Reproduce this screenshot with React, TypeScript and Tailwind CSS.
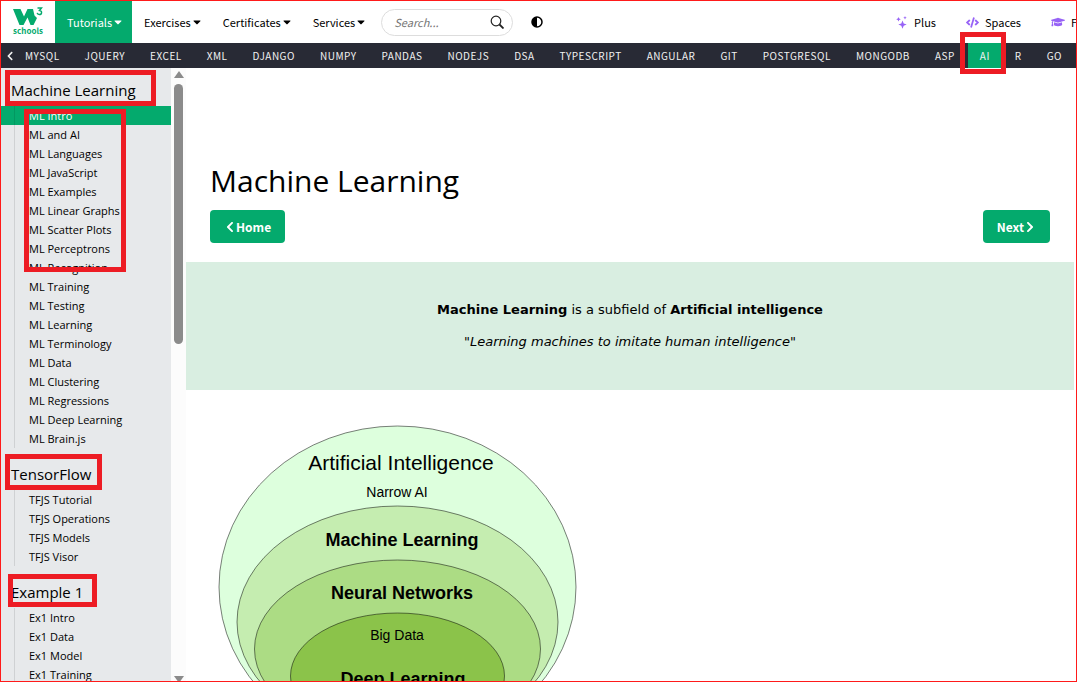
import { FaCaretDown, FaChevronLeft, FaChevronRight, FaCode, FaGraduationCap } from 'react-icons/fa';

const MENUS = ['Exercises', 'Certificates', 'Services'];

const TOPICS = [
  'MYSQL', 'JQUERY', 'EXCEL', 'XML', 'DJANGO', 'NUMPY', 'PANDAS', 'NODEJS', 'DSA', 'TYPESCRIPT',
  'ANGULAR', 'GIT', 'POSTGRESQL', 'MONGODB', 'ASP', 'AI', 'R', 'GO',
];

const SECTIONS = [
  {
    title: 'Machine Learning',
    links: [
      'ML Intro', 'ML and AI', 'ML Languages', 'ML JavaScript', 'ML Examples', 'ML Linear Graphs',
      'ML Scatter Plots', 'ML Perceptrons', 'ML Recognition', 'ML Training', 'ML Testing', 'ML Learning',
      'ML Terminology', 'ML Data', 'ML Clustering', 'ML Regressions', 'ML Deep Learning', 'ML Brain.js',
    ],
  },
  { title: 'TensorFlow', links: ['TFJS Tutorial', 'TFJS Operations', 'TFJS Models', 'TFJS Visor'] },
  { title: 'Example 1', links: ['Ex1 Intro', 'Ex1 Data', 'Ex1 Model', 'Ex1 Training'] },
];

// red highlight frames drawn over the page
const MARKS = [
  'left-[5px] top-[70px] w-[151px] h-[36px]',
  'left-[24px] top-[109px] w-[102px] h-[163px]',
  'left-[5px] top-[454px] w-[97px] h-[36px]',
  'left-[8px] top-[574px] w-[89px] h-[33px]',
  'left-[960px] top-[32px] w-[46px] h-[42px]',
];

function Logo() {
  return (
    <a href="#" aria-label="W3Schools home" className="flex w-[54px] shrink-0 flex-col items-center pt-1.5 text-[#04AA6D]">
      <svg viewBox="0 0 30 19" className="h-[19px] w-[30px]" fill="currentColor">
        <path d="M0 2H7.500L11 9.500 14.500 2H20L21.500 8.500 24 11 20.500 18H17.500L14.500 10.500 10.500 18H6.500Z" />
        <path d="M24.500 1h4l-2 2.500c3 .2 2.600 4-.2 4-1.200 0-2-.6-2.200-1.600" fill="none" stroke="currentColor" strokeWidth="1.400" />
      </svg>
      <span className="font-['Noto_Sans_CJK_SC',sans-serif] text-[8px] leading-[10px] font-bold">schools</span>
    </a>
  );
}

function TopNav() {
  return (
    <header className="flex h-[42px] shrink-0 items-stretch overflow-hidden font-['Noto_Sans_CJK_SC',sans-serif] text-[11px] text-black">
      <Logo />
      <button className="flex shrink-0 items-center bg-[#04AA6D] px-3 text-white">
        Tutorials <FaCaretDown size={12} className="-mr-1" />
      </button>
      {MENUS.map(m => (
        <button key={m} className="flex shrink-0 items-center px-3">
          {m} <FaCaretDown size={12} className="-mr-1" />
        </button>
      ))}
      <div className="ml-1.5 flex h-[27px] w-[132px] shrink-0 items-center self-center rounded-full border border-[#dddddd] pr-2 pl-3">
        <input aria-label="Search" placeholder="Search..." className="w-full min-w-0 italic outline-none placeholder:text-[#757575]" />
        <button aria-label="Submit search">
          <svg viewBox="0 0 14 14" className="size-3.5" fill="none" stroke="#222" strokeWidth="1.200">
            <circle cx="6" cy="6" r="4.800" />
            <path d="M9.500 9.500l4 4" strokeWidth="1.800" />
          </svg>
        </button>
      </div>
      <button aria-label="Toggle dark mode" className="ml-[18px] shrink-0">
        <svg viewBox="0 0 12 12" className="size-3">
          <circle cx="6" cy="6" r="5" fill="white" stroke="black" strokeWidth="1.500" />
          <path d="M6 1a5 5 0 0 0 0 10z" />
        </svg>
      </button>
      <nav className="ml-auto flex shrink-0 items-center whitespace-nowrap">
        <a href="#" className="mr-[30px] flex items-center gap-1.5">
          <svg viewBox="0 0 12 13" className="h-[13px] w-3" fill="#9763f6">
            <path d="M6.500 4.500l1.200 3 3 1-3 1.200-1.200 3-1.200-3-3-1.200 3-1z" />
            <path d="M2.500 1l.7 1.600 1.600.6-1.600.7-.7 1.600-.7-1.600-1.600-.7 1.600-.6zM9 0l.5 1.200 1.200.5-1.200.5L9 3.400l-.5-1.200-1.200-.5 1.200-.5z" />
          </svg>
          Plus
        </a>
        <a href="#" className="mr-[30px] flex items-center gap-1.5">
          <FaCode size={13} color="#9763f6" /> Spaces
        </a>
        <a href="#" className="flex w-[25px] items-center gap-1.5 overflow-hidden">
          <FaGraduationCap size={14} color="#9763f6" className="shrink-0" /> For Teachers
        </a>
      </nav>
    </header>
  );
}

function TopicBar() {
  return (
    <nav className="flex h-[25px] shrink-0 items-stretch gap-px overflow-hidden bg-[#282A35] font-['Noto_Sans_CJK_SC',sans-serif] text-[10px] tracking-wider text-[#f1f1f1]">
      <button aria-label="Scroll left" className="w-[11px] shrink-0 pl-1"><FaChevronLeft size={10} /></button>
      {TOPICS.map(t => (
        <a key={t} href="#" className={t === 'AI' ? 'flex shrink-0 items-center bg-[#04AA6D] px-3' : 'flex shrink-0 items-center px-3'}>{t}</a>
      ))}
    </nav>
  );
}

function Sidebar() {
  return (
    <aside className="flex w-[185px] shrink-0 overflow-hidden font-['Open_Sans',sans-serif] text-black">
      <div className="flex-1 bg-[#E7E9EB] pt-2.5">
        {SECTIONS.map(s => (
          <section key={s.title} className="mb-3.5">
            <h2 className="pb-1 pl-2.5 text-[15px] leading-6">{s.title}</h2>
            <ul className="relative before:absolute before:inset-y-0 before:left-[13px] before:w-px before:bg-black/10">
              {s.links.map(l => (
                <li key={l}>
                  <a href="#" className={l === 'ML Intro' ? 'block bg-[#04AA6D] pl-7 text-[11px] leading-[19px] text-white' : 'block pl-7 text-[11px] leading-[19px]'}>{l}</a>
                </li>
              ))}
            </ul>
          </section>
        ))}
      </div>
      <div className="flex w-[15px] shrink-0 flex-col items-center bg-[#fcfcfc] pt-[3px]">
        <svg viewBox="0 0 10 7" className="h-[7px] w-2.5" fill="#8b8b8b"><path d="M5 0l5 7H0z" /></svg>
        <div className="mt-1.5 h-[260px] w-[9px] rounded-full bg-[#8b8b8b]" />
        <svg viewBox="0 0 10 7" className="mt-auto h-[7px] w-2.5" fill="#8b8b8b"><path d="M0 2h10L5 9z" /></svg>
      </div>
    </aside>
  );
}

function Diagram() {
  return (
    <svg viewBox="0 0 380 340" className="mt-6 ml-6 h-[340px] w-[380px] font-['Liberation_Sans',sans-serif]" textAnchor="middle">
      <g stroke="#000" strokeOpacity="0.5">
        <ellipse cx="187.500" cy="173" rx="178.500" ry="161" fill="#ddffdd" />
        <ellipse cx="187.500" cy="208" rx="160.500" ry="116" fill="#c5edb0" />
        <ellipse cx="187.500" cy="235" rx="143" ry="89" fill="#acdc84" />
        <ellipse cx="187.500" cy="262" rx="107" ry="63" fill="#8bc34a" />
      </g>
      <text x="191" y="56" fontSize="21">Artificial Intelligence</text>
      <text x="187" y="83" fontSize="14">Narrow AI</text>
      <text x="192" y="132" fontSize="18" fontWeight="bold">Machine Learning</text>
      <text x="192" y="185" fontSize="18" fontWeight="bold">Neural Networks</text>
      <text x="187" y="226" fontSize="14">Big Data</text>
      <text x="193" y="271" fontSize="18" fontWeight="bold">Deep Learning</text>
    </svg>
  );
}

export default function App() {
  return (
    <div className="relative flex h-screen flex-col overflow-hidden border border-[#ff1a1a] bg-white">
      <TopNav />
      <TopicBar />
      <div className="flex min-h-0 flex-1">
        <Sidebar />
        <main className="mr-0.5 min-w-0 flex-1 overflow-hidden pt-[90px] text-black">
          <h1 className="px-6 font-['Open_Sans',sans-serif] text-[30px] leading-[46px]">Machine Learning</h1>
          <div className="mt-1.5 flex justify-between px-6 font-['Noto_Sans_CJK_SC',sans-serif] text-[12px] font-bold text-white">
            <button className="flex h-[33px] items-center rounded bg-[#04AA6D] px-3.5">
              <FaChevronLeft size={12} /> Home
            </button>
            <button className="flex h-[33px] items-center rounded bg-[#04AA6D] px-3.5">
              Next <FaChevronRight size={12} />
            </button>
          </div>
          <div className="mt-[19px] flex flex-col gap-2 bg-[#D9EEE1] py-9 text-center font-['DejaVu_Sans',sans-serif] text-[13px] leading-6">
            <p><b>Machine Learning</b> is a subfield of <b>Artificial intelligence</b></p>
            <p className="italic">"Learning machines to imitate human intelligence"</p>
          </div>
          <Diagram />
        </main>
      </div>
      <div className="pointer-events-none absolute -inset-px overflow-hidden">
        {MARKS.map(m => <div key={m} className={`absolute border-[5px] border-[#ed1c24] ${m}`} />)}
      </div>
    </div>
  );
}
